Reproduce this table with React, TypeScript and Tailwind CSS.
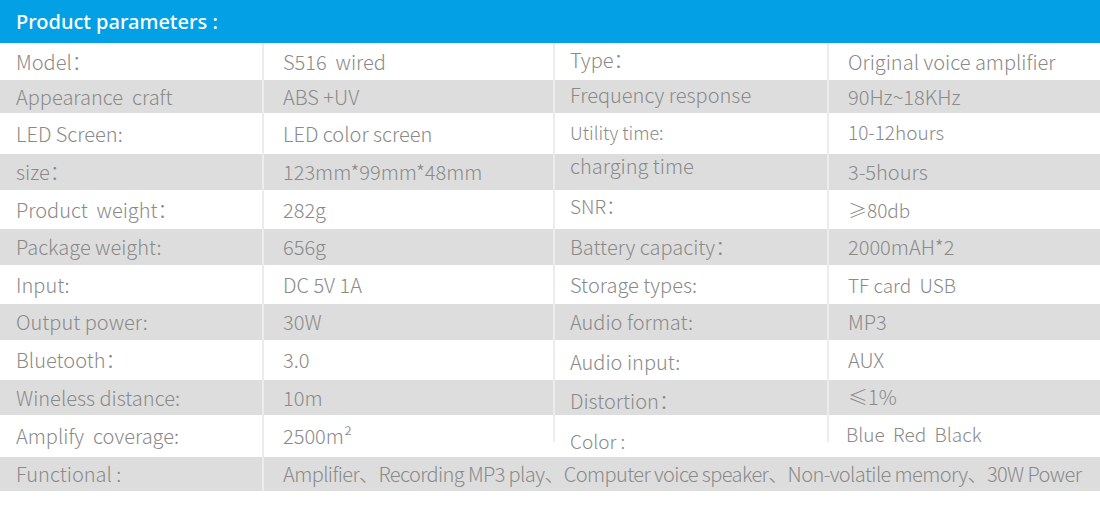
import React from "react";

type Cell = { t: string; cls?: string; size?: string };
type Row = { h: string; bg: boolean; cells: Cell[]; shortRight?: boolean };

const rows: Row[] = [
  { h: "h-[37px]", bg: false, cells: [{ t: "Model：" }, { t: "S516  wired" }, { t: "Type：", cls: "-translate-y-[2px]" }, { t: "Original voice amplifier" }] },
  { h: "h-[33px]", bg: true, cells: [{ t: "Appearance  craft" }, { t: "ABS +UV" }, { t: "Frequency response", cls: "-translate-y-[2px]" }, { t: "90Hz~18KHz" }] },
  { h: "h-[41px]", bg: false, cells: [{ t: "LED Screen:" }, { t: "LED color screen" }, { t: "Utility time:", size: "text-[18px]", cls: "-translate-y-[2px]" }, { t: "10-12hours", size: "text-[19px]", cls: "-translate-y-[2px]" }] },
  { h: "h-[36px]", bg: true, cells: [{ t: "size：" }, { t: "123mm*99mm*48mm" }, { t: "charging time", cls: "-translate-y-[6px]" }, { t: "3-5hours" }] },
  { h: "h-[39px]", bg: false, cells: [{ t: "Product  weight：" }, { t: "282g" }, { t: "SNR：", size: "text-[19px]", cls: "-translate-y-[4px]" }, { t: "≥80db", size: "text-[19px]" }] },
  { h: "h-[36px]", bg: true, cells: [{ t: "Package weight:" }, { t: "656g" }, { t: "Battery capacity：" }, { t: "2000mAH*2" }] },
  { h: "h-[39px]", bg: false, cells: [{ t: "Input:" }, { t: "DC 5V 1A" }, { t: "Storage types:" }, { t: "TF card  USB", size: "text-[19px]" }] },
  { h: "h-[36px]", bg: true, cells: [{ t: "Output power:" }, { t: "30W" }, { t: "Audio format:" }, { t: "MP3" }] },
  { h: "h-[40px]", bg: false, cells: [{ t: "Bluetooth：" }, { t: "3.0" }, { t: "Audio input:", cls: "translate-y-[2px]" }, { t: "AUX" }] },
  { h: "h-[35px]", bg: true, cells: [{ t: "Wineless distance:" }, { t: "10m" }, { t: "Distortion：", cls: "translate-y-[3px]" }, { t: "≤1%", cls: "-translate-y-[1px]" }] },
  { h: "h-[42px]", bg: false, shortRight: true, cells: [{ t: "Amplify  coverage:" }, { t: "2500m²" }, { t: "Color :", size: "text-[19px]", cls: "translate-y-[4px] pl-[2px]" }, { t: "Blue  Red  Black", size: "text-[19px]", cls: "-translate-y-[3px]" }] },
];

const font = { fontFamily: '"Noto Sans CJK SC", "Noto Sans", sans-serif' };

function CellBox({ c, w, pl, border, short }: { c: Cell; w: string; pl: string; border: boolean; short?: boolean }) {
  return (
    <div className={`relative flex h-full items-center ${w} ${pl} ${border && !short ? "border-l-2 border-[#ececec]" : ""}`}>
      {border && short ? <div className="absolute left-0 top-0 h-[27px] w-[2px] bg-[#ececec]" /> : null}
      <span className={`whitespace-pre font-light leading-none text-[#8a8a8a] ${c.size ?? "text-[20px]"} ${c.cls ?? ""}`}>{c.t}</span>
    </div>
  );
}

export default function App() {
  return (
    <div className="h-[507px] w-[1100px] bg-white" style={font}>
      <div className="flex h-[43px] items-center bg-[#04a0e6] pl-[16px]">
        <span className="text-[20px] font-medium text-white" style={{ fontFamily: '"Noto Sans", sans-serif' }}>
          Product parameters :
        </span>
      </div>
      {rows.map((r, i) => (
        <div key={i} className={`flex ${r.h} ${r.bg ? "bg-[#dddddd]" : "bg-white"}`}>
          <CellBox c={r.cells[0]} w="w-[262px]" pl="pl-[16px]" border={false} />
          <CellBox c={r.cells[1]} w="w-[291px]" pl="pl-[19px]" border={true} />
          <CellBox c={r.cells[2]} w="w-[274px]" pl="pl-[15px]" border={true} short={r.shortRight} />
          <CellBox c={r.cells[3]} w="flex-1" pl="pl-[19px]" border={true} short={r.shortRight} />
        </div>
      ))}
      <div className="flex h-[34px] bg-[#dddddd]">
        <CellBox c={{ t: "Functional :" }} w="w-[262px]" pl="pl-[16px]" border={false} />
        <CellBox
          c={{ t: "Amplifier、Recording MP3 play、Computer voice speaker、Non-volatile memory、30W Power", cls: "tracking-[-0.6px]" }}
          w="flex-1"
          pl="pl-[19px]"
          border={true}
        />
      </div>
    </div>
  );
}
